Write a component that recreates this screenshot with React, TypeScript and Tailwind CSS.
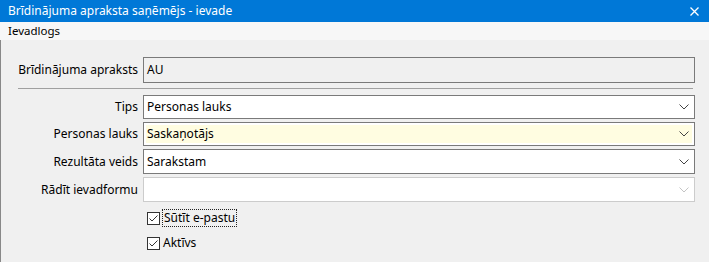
import React from "react";

const font = { fontFamily: '"Noto Sans", "Liberation Sans", sans-serif' };

function Chevron({ light }: { light?: boolean }) {
  return (
    <svg width="10" height="6" viewBox="0 0 10 6" className="shrink-0">
      <path d="M0.5 0.5 L5 5 L9.5 0.5" fill="none" stroke={light ? "#c4c4c4" : "#444"} strokeWidth="1" />
    </svg>
  );
}

function Check() {
  return (
    <div className="w-[13px] h-[13px] border border-[#333] bg-white flex items-center justify-center shrink-0">
      <svg width="11" height="11" viewBox="0 0 11 11">
        <path d="M1.5 5.5 L4 8 L9.5 2.5" fill="none" stroke="#333" strokeWidth="1" />
      </svg>
    </div>
  );
}

function Label({ children, h }: { children: React.ReactNode; h: string }) {
  return (
    <div className={`w-[142px] pr-[5px] text-right shrink-0 flex items-center justify-end ${h}`}>{children}</div>
  );
}

export default function App() {
  return (
    <div className="w-[709px] h-[262px] bg-[#f0f0f0] overflow-hidden text-[12px] text-black" style={font}>
      <div className="h-[22px] bg-[#0078d7] text-white flex items-center justify-between pl-[8px] pr-[10px]">
        <span className="text-[12px] leading-none">Brīdinājuma apraksta saņēmējs - ievade</span>
        <svg width="9" height="9" viewBox="0 0 9 9">
          <path d="M0.5 0.5 L8.5 8.5 M8.5 0.5 L0.5 8.5" stroke="#fff" strokeWidth="1.3" />
        </svg>
      </div>
      <div className="h-[18px] bg-[#f7f7f7] flex items-center pl-[8px]">
        <span className="leading-none text-[11.5px]">Ievadlogs</span>
      </div>
      <div className="h-[222px] border-l border-[#888] pr-[14px] pt-[17px]">
        <div className="flex">
          <Label h="h-[26px]">Brīdinājuma apraksts</Label>
          <div className="flex-1 h-[26px] border border-[#7a7a7a] bg-[#f0f0f0] flex items-center pl-[3px]">AU</div>
        </div>
        <div className="mt-[5px] ml-[17px] mr-[2px] h-px bg-[#a0a0a0]" />
        <div className="flex mt-[6px]">
          <Label h="h-[24px]">Tips</Label>
          <div className="flex-1 h-[24px] border border-[#7a7a7a] bg-white flex items-center pl-[3px] pr-[5px] justify-between">
            <span>Personas lauks</span>
            <Chevron />
          </div>
        </div>
        <div className="flex mt-[3px]">
          <Label h="h-[24px]">Personas lauks</Label>
          <div className="flex-1 h-[24px] border border-[#7a7a7a] bg-white p-[2px]">
            <div className="h-full bg-[#fffde1] flex items-center pl-[1px] pr-[3px] justify-between">
              <span>Saskaņotājs</span>
              <Chevron />
            </div>
          </div>
        </div>
        <div className="flex mt-[3px]">
          <Label h="h-[25px]">Rezultāta veids</Label>
          <div className="flex-1 h-[25px] border border-[#7a7a7a] bg-white flex items-center pl-[3px] pr-[5px] justify-between">
            <span>Sarakstam</span>
            <Chevron />
          </div>
        </div>
        <div className="flex mt-[3px]">
          <Label h="h-[25px]">Rādīt ievadformu</Label>
          <div className="flex-1 h-[25px] border border-[#cccccc] bg-white flex items-center pl-[3px] pr-[5px] justify-end">
            <Chevron light />
          </div>
        </div>
        <div className="flex items-center ml-[146px] mt-[6px] h-[20px]">
          <Check />
          <span className="ml-[2px] px-[1px] border border-dotted border-[#222] leading-[16px]">Sūtīt e-pastu</span>
        </div>
        <div className="flex items-center ml-[146px] mt-[5px] h-[20px]">
          <Check />
          <span className="ml-[3px] leading-[16px]">Aktīvs</span>
        </div>
      </div>
    </div>
  );
}
